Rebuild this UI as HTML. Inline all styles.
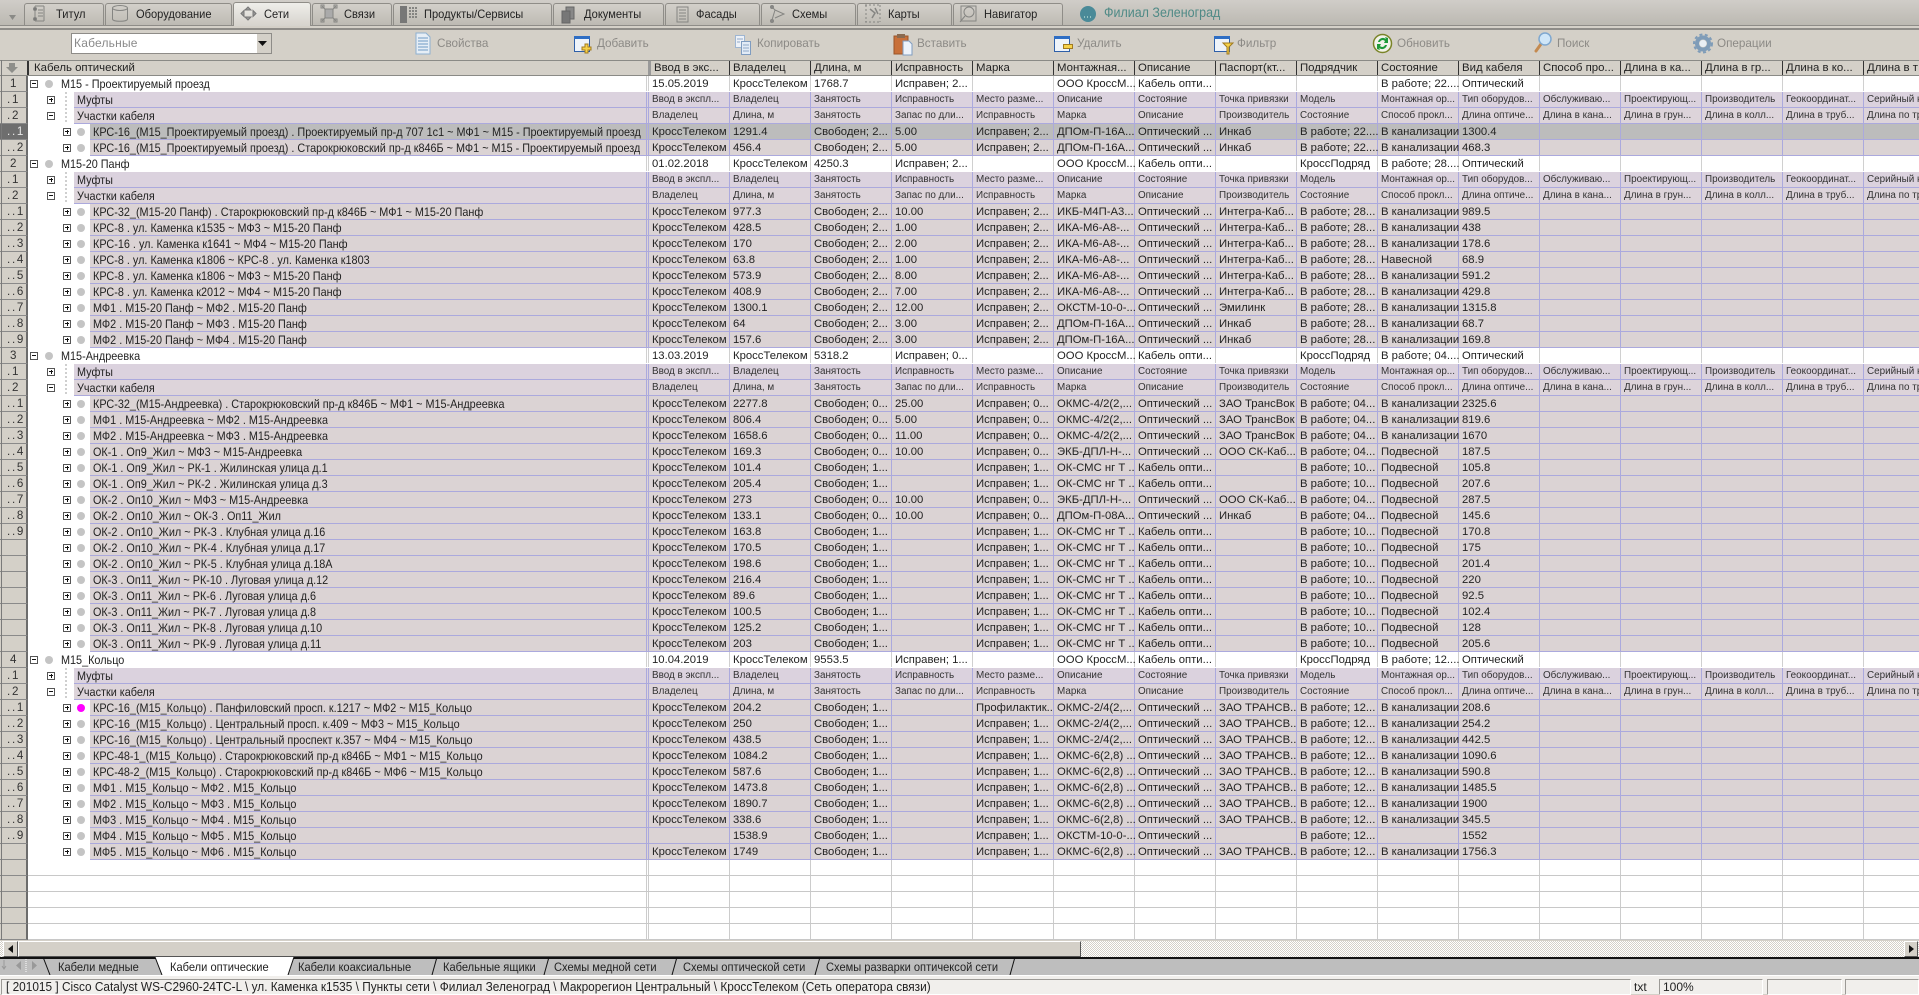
<!DOCTYPE html>
<html lang="ru"><head><meta charset="utf-8"><title>Кабель оптический</title>
<style>
*{box-sizing:border-box}
html,body{margin:0;padding:0}
body{width:1919px;height:994px;overflow:hidden;position:relative;background:#d4d0c8;font:12px "Liberation Sans","Noto Sans CJK SC",sans-serif;color:#222}
.abs,.tab,.tt,.tb{position:absolute}
#top{left:0;top:0;width:1919px;height:26px;background:linear-gradient(#d0cdc8,#bbb8b1);}
.tab{top:3px;height:22px;background:linear-gradient(#d3d0ca,#bdbab3);border:1px solid #8f8d88;border-bottom:0;border-radius:3px 3px 0 0}
.tab.on{top:2px;height:24px;background:linear-gradient(#efeeea,#d6d3cd);z-index:2}
.tt{top:4px;height:20px;line-height:20px;z-index:3;color:#222;transform:scaleX(.925);transform-origin:0 0;white-space:nowrap}
.tb{top:36px;line-height:16px;color:#8c8a86;font-size:11.7px}
#grid{position:absolute;left:0;top:76px;width:1919px}
.r{position:relative;height:16px;white-space:nowrap;padding-left:649px;font-size:0;border-bottom:1px solid var(--l);--l:#aba9dd;--c:#aba9dd;
background:
linear-gradient(var(--c),var(--c)) 646px 0/1px 100% no-repeat,linear-gradient(var(--c),var(--c)) 648px 0/1px 100% no-repeat,
linear-gradient(var(--c),var(--c)) 729px 0/1px 100% no-repeat,linear-gradient(var(--c),var(--c)) 810px 0/1px 100% no-repeat,
linear-gradient(var(--c),var(--c)) 891px 0/1px 100% no-repeat,linear-gradient(var(--c),var(--c)) 972px 0/1px 100% no-repeat,
linear-gradient(var(--c),var(--c)) 1053px 0/1px 100% no-repeat,linear-gradient(var(--c),var(--c)) 1134px 0/1px 100% no-repeat,
linear-gradient(var(--c),var(--c)) 1215px 0/1px 100% no-repeat,linear-gradient(var(--c),var(--c)) 1296px 0/1px 100% no-repeat,
linear-gradient(var(--c),var(--c)) 1377px 0/1px 100% no-repeat,linear-gradient(var(--c),var(--c)) 1458px 0/1px 100% no-repeat,
linear-gradient(var(--c),var(--c)) 1539px 0/1px 100% no-repeat,linear-gradient(var(--c),var(--c)) 1620px 0/1px 100% no-repeat,
linear-gradient(var(--c),var(--c)) 1701px 0/1px 100% no-repeat,linear-gradient(var(--c),var(--c)) 1782px 0/1px 100% no-repeat,
linear-gradient(var(--c),var(--c)) 1863px 0/1px 100% no-repeat,var(--b)}
.w{--b:#fff;--c:#d0d0d0;--l:#fff}
.m{--b:#dbd2de}
.u{--b:#ddd4da}
.d{--b:#dbd3d4}
.s{--b:#bcbcbc}
.e{--b:#fff;--c:#ccc;--l:#c8c8c8}
.r i{display:inline-block;width:81px;height:15px;padding-left:3px;overflow:hidden;font:normal 11.3px/17px "Liberation Sans",sans-serif;vertical-align:top;color:#222}
.m i,.u i{font-size:9.9px;line-height:16px;color:#333}
.r b{position:absolute;left:0;top:0;height:16px;width:28px;background:#d4d0c8;border-right:2px solid #6c6c6c;border-bottom:1px solid #8a8a8a;font:normal 11.6px/16px "Liberation Sans",sans-serif;padding-left:7px;word-spacing:-1.500px;z-index:3;color:#333;white-space:pre;overflow:hidden}
.w b{padding-left:10px}
.s b{background:#6e6e6e;color:#e8e8e8}
.m:before,.u:before,.d:before,.s:before{content:"";position:absolute;left:28px;top:0;height:16px;background:#fff;z-index:1}
.m:before,.u:before{width:46px}
.d:before,.s:before{width:62px}
.m:after,.u:after{content:"";position:absolute;left:65px;top:0;height:16px;width:2px;z-index:2;background:repeating-linear-gradient(#cfcfcf 0 2px,#fff 2px 4px)}
.r u{position:absolute;top:4px;width:8px;height:8px;border:1px solid #555;background:#fff;z-index:2}
.r u:before{content:"";position:absolute;left:1px;top:2px;width:4px;height:1px;background:#111}
.r u.p:after{content:"";position:absolute;left:2.500px;top:1px;width:1px;height:4px;background:#111}
.w u{left:30px}.m u,.u u{left:47px}.d u,.s u{left:63px}
.r em{position:absolute;top:4px;width:8px;height:8px;border-radius:50%;background:#c4c4c4;z-index:2}
.w em{left:45px}.d em,.s em{left:77px}
.r em.g{background:#f0f}
.r span{position:absolute;top:0;font:normal 11.6px/17px "Liberation Sans",sans-serif;color:#222;z-index:2;max-width:590px;height:15px;overflow:hidden;transform:scaleX(.935);transform-origin:0 0}
.w span{left:61px}.m span,.u span{left:77px}.d span,.s span{left:93px}
#hd{position:absolute;left:0;top:60px;width:1919px;height:16px;background:#d4d0c8;border-top:1px solid #8a8a86;border-bottom:1px solid #8a8a86;overflow:hidden;font-size:11.4px}
#hd div{position:absolute;top:0;height:15px;line-height:14px;padding-left:3px;border-left:1px solid #333;white-space:nowrap;overflow:hidden;width:81px}
#sb{position:absolute;left:0;top:941px;width:1919px;height:16px;background:repeating-conic-gradient(#d4d0c8 0 25%,#fff 0 50%) 0 0/2px 2px}
.btn{position:absolute;top:0;height:16px;background:#d4d0c8;border:1px solid;border-color:#fff #555 #555 #fff}
#st{position:absolute;left:0;top:975px;width:1919px;height:19px;background:#f1efec;border-top:1px solid #fff}
.pane{position:absolute;top:3px;height:16px;border:1px solid;border-color:#9c9a96 #fff #fff #9c9a96}
#sheet{position:absolute;left:0;top:957px;width:1919px;height:18px;background:#bebebe;border-top:2px solid #111}
#sheet div{position:absolute;top:0;line-height:17px;color:#222;white-space:nowrap;z-index:3;transform:scaleX(.925);transform-origin:0 0}
</style></head><body>
<div id="top" class="abs"></div>
<div class="abs" style="left:0;top:25px;width:1919px;height:1px;background:#8e8c88"></div>
<div class="abs" style="left:0;top:28px;width:1919px;height:2px;background:#8e8c88"></div>
<div class="tab" style="left:24px;width:80px"></div>
<div class="tab" style="left:105px;width:127px"></div>
<div class="tab on" style="left:233px;width:78px"></div>
<div class="tab" style="left:312px;width:80px"></div>
<div class="tab" style="left:393px;width:159px"></div>
<div class="tab" style="left:553px;width:111px"></div>
<div class="tab" style="left:665px;width:95px"></div>
<div class="tab" style="left:761px;width:95px"></div>
<div class="tab" style="left:857px;width:95px"></div>
<div class="tab" style="left:953px;width:110px"></div>
<div class="tt" style="left:56px">Титул</div>
<div class="tt" style="left:136px">Оборудование</div>
<div class="tt" style="left:264px">Сети</div>
<div class="tt" style="left:344px">Связи</div>
<div class="tt" style="left:424px">Продукты/Сервисы</div>
<div class="tt" style="left:584px">Документы</div>
<div class="tt" style="left:696px">Фасады</div>
<div class="tt" style="left:792px">Схемы</div>
<div class="tt" style="left:888px">Карты</div>
<div class="tt" style="left:984px">Навигатор</div>
<div class="tt" style="left:1104px;top:3px;color:#4f8a86;font-size:13.500px">Филиал Зеленоград</div>
<svg class="abs" style="left:0;top:0;z-index:4" width="1919" height="60" fill="none">
<path d="M9 15h7l-3.500 5z" fill="#8a8a86"/>
<g stroke="#858582" stroke-width="1">
<path d="M35 6h9M35 21h9M35 6v15M44 6v15M38 10h5M38 13h5M38 16h5"/><circle cx="35" cy="9" r="1.500" fill="#777"/><circle cx="35" cy="19" r="1.500" fill="#777"/>
<ellipse cx="120" cy="8" rx="7.500" ry="2.500"/><path d="M112.500 8v11c0 3 15 3 15 0V8"/>
<path d="M248 7l-3 3h6zM248 20l-3-3h6zM241 13.500l3-3v6zM256 13.500l-3-3v6z" fill="#999" stroke="#777"/>
<path d="M322 6l14 15M336 6l-14 15"/><rect x="325" y="9" width="8" height="9" fill="#aaa"/><rect x="321" y="5" width="3" height="3"/><rect x="334" y="5" width="3" height="3"/><rect x="321" y="19" width="3" height="3"/><rect x="334" y="19" width="3" height="3"/>
<rect x="400" y="6" width="7" height="17" fill="#777" stroke="none"/><path d="M409 8h8M409 11h8M409 14h8M409 17h8" stroke-dasharray="2 1" stroke-width="2"/>
<rect x="566" y="7" width="8" height="12" fill="#888" stroke="#666"/><rect x="562" y="11" width="8" height="12" fill="#777" stroke="#666"/>
<rect x="677" y="7" width="11" height="15"/><path d="M679 10h7M679 13h7M679 16h7M679 19h7"/>
<path d="M772 7l3 3-3 10M775 10l9 4-9 4"/><circle cx="772" cy="7" r="1.500" fill="#888"/><circle cx="772" cy="21" r="1.500" fill="#888"/>
<path d="M865 5h16M865 22h16M866 5v17M880 5v17" stroke-dasharray="2 2"/><path d="M870 9l5 4-3 5M875 8l3 6" stroke-width="1.500"/>
<rect x="961" y="6" width="15" height="15"/><circle cx="969" cy="12" r="5"/><path d="M965 16l-5 6"/>
</g>
<circle cx="1088" cy="14" r="8" fill="#4a8a98"/><path d="M1084 17h1M1087 17h1M1090 17h1" stroke="#dfe" stroke-width="1"/>
<path d="M416 33h10l4 4v17h-14z" fill="#e6eef6" stroke="#8eb0d0"/><path d="M418 38h10M418 41h10M418 44h10M418 47h10M418 50h10" stroke="#6f9ac4"/>
<rect x="574.500" y="36.500" width="15" height="15" fill="#eef3fa" stroke="#2e5fa8"/><rect x="574" y="36" width="16" height="3" fill="#2f6ec4"/>
<path d="M585 44h3v3h3v3h-3v3h-3v-3h-3v-3h3z" fill="#f6d24a" stroke="#a07a20"/>
<rect x="735.500" y="35.500" width="9" height="12" fill="#eef2f8" stroke="#9fb6d2"/><rect x="741.500" y="41.500" width="9" height="13" fill="#e2ebf6" stroke="#7f9cc0"/><path d="M737 39h6M737 42h3M743 45h6M743 48h6M743 51h6" stroke="#90a8c8"/>
<rect x="894" y="36" width="14" height="18" fill="#c8703a" stroke="#9a5528"/><rect x="897" y="34" width="8" height="4" fill="#8a6a50"/><path d="M903 41h6l3 3v11h-9z" fill="#eef3fa" stroke="#7f9cc0"/>
<rect x="1054.500" y="36.500" width="15" height="15" fill="#eef3fa" stroke="#2e5fa8"/><rect x="1054" y="36" width="16" height="3" fill="#2f6ec4"/><rect x="1063.500" y="44.500" width="9" height="4" fill="#f6d24a" stroke="#a07a20"/>
<rect x="1214.500" y="36.500" width="15" height="15" fill="#eef3fa" stroke="#2e5fa8"/><rect x="1214" y="36" width="16" height="3" fill="#2f6ec4"/><path d="M1223 43h10l-4 4v7h-2v-7z" fill="#f6d24a" stroke="#a07a20"/>
<circle cx="1382.500" cy="43.500" r="9" fill="#f3f3ea" stroke="#7a8428" stroke-width="1.500"/><path d="M1378 42a5 5 0 0 1 8-3l-1-2 3 1v5h-4l1-2a3 3 0 0 0-5 1zM1387 45a5 5 0 0 1-8 3l1 2-3-1v-5h4l-1 2a3 3 0 0 0 5-1z" fill="#1f9a3a"/>
<path d="M1541 44l-5 7" stroke="#c48a50" stroke-width="3" stroke-linecap="round"/><circle cx="1545" cy="39" r="6" fill="#cfe6f8" stroke="#7fa8d0" stroke-width="1.500"/>
<circle cx="1703" cy="43.500" r="6" stroke="#7f9cb8" stroke-width="4"/><circle cx="1703" cy="43.500" r="9" stroke="#7f9cb8" stroke-width="2" stroke-dasharray="3 2.500"/><circle cx="1703" cy="43.500" r="3.500" fill="#e8eef4"/>
</svg>
<div class="abs" style="left:71px;top:33px;width:201px;height:21px;background:#fff;border:1px solid #8e8c88;padding-left:2px;line-height:18px;color:#8a8a8a;letter-spacing:.2px">Кабельные</div>
<div class="abs" style="left:256px;top:34px;width:15px;height:19px;background:#d4d0c8;border-left:1px solid #fff"></div>
<svg class="abs" style="left:258px;top:41px;z-index:4" width="10" height="6"><path d="M0 0h9l-4.500 5z" fill="#111"/></svg>
<div class="tb" style="left:437px">Свойства</div>
<div class="tb" style="left:597px">Добавить</div>
<div class="tb" style="left:757px">Копировать</div>
<div class="tb" style="left:917px">Вставить</div>
<div class="tb" style="left:1077px">Удалить</div>
<div class="tb" style="left:1237px">Фильтр</div>
<div class="tb" style="left:1397px">Обновить</div>
<div class="tb" style="left:1557px">Поиск</div>
<div class="tb" style="left:1717px">Операции</div>
<div id="hd">
<div style="left:27px;width:619px;padding-left:5px;border-left:2px solid #333">Кабель оптический</div>
<div style="left:648px;border-left:3px solid #999">Ввод в экс...</div>
<div style="left:729px">Владелец</div><div style="left:810px">Длина, м</div><div style="left:891px">Исправность</div><div style="left:972px">Марка</div><div style="left:1053px">Монтажная...</div><div style="left:1134px">Описание</div><div style="left:1215px">Паспорт(кт...</div><div style="left:1296px">Подрядчик</div><div style="left:1377px">Состояние</div><div style="left:1458px">Вид кабеля</div><div style="left:1539px">Способ про...</div><div style="left:1620px">Длина в ка...</div><div style="left:1701px">Длина в гр...</div><div style="left:1782px">Длина в ко...</div><div style="left:1863px">Длина в т</div>
<svg class="abs" style="left:5px;top:2px" width="14" height="12"><path d="M4 0h6v4h3l-6 6-6-6h3z" fill="#8e8e8a"/></svg>
</div>
<div id="grid">
<div class="r w"><b>1</b><u class="n"></u><em></em><span>М15 - Проектируемый проезд</span><i>15.05.2019</i><i>КроссТелеком</i><i>1768.7</i><i>Исправен; 2...</i><i></i><i>ООО КроссМ...</i><i>Кабель опти...</i><i></i><i></i><i>В работе; 22....</i><i>Оптический</i></div>
<div class="r m"><b>. 1</b><u class="p"></u><span>Муфты</span><i>Ввод в экспл...</i><i>Владелец</i><i>Занятость</i><i>Исправность</i><i>Место разме...</i><i>Описание</i><i>Состояние</i><i>Точка привязки</i><i>Модель</i><i>Монтажная ор...</i><i>Тип оборудов...</i><i>Обслуживаю...</i><i>Проектирующ...</i><i>Производитель</i><i>Геокоординат...</i><i>Серийный н</i></div>
<div class="r u"><b>. 2</b><u class="n"></u><span>Участки кабеля</span><i>Владелец</i><i>Длина, м</i><i>Занятость</i><i>Запас по дли...</i><i>Исправность</i><i>Марка</i><i>Описание</i><i>Производитель</i><i>Состояние</i><i>Способ прокл...</i><i>Длина оптиче...</i><i>Длина в кана...</i><i>Длина в грун...</i><i>Длина в колл...</i><i>Длина в труб...</i><i>Длина по тр</i></div>
<div class="r s"><b>. . 1</b><u class="p"></u><em></em><span>КРС-16_(М15_Проектируемый проезд) . Проектируемый пр-д 707 1с1 ~ МФ1 ~ М15 - Проектируемый проезд</span><i>КроссТелеком</i><i>1291.4</i><i>Свободен; 2...</i><i>5.00</i><i>Исправен; 2...</i><i>ДПОм-П-16А...</i><i>Оптический ...</i><i>Инкаб</i><i>В работе; 22....</i><i>В канализации</i><i>1300.4</i></div>
<div class="r d"><b>. . 2</b><u class="p"></u><em></em><span>КРС-16_(М15_Проектируемый проезд) . Старокрюковский пр-д к846Б ~ МФ1 ~ М15 - Проектируемый проезд</span><i>КроссТелеком</i><i>456.4</i><i>Свободен; 2...</i><i>5.00</i><i>Исправен; 2...</i><i>ДПОм-П-16А...</i><i>Оптический ...</i><i>Инкаб</i><i>В работе; 22....</i><i>В канализации</i><i>468.3</i></div>

<div class="r w"><b>2</b><u class="n"></u><em></em><span>М15-20 Панф</span><i>01.02.2018</i><i>КроссТелеком</i><i>4250.3</i><i>Исправен; 2...</i><i></i><i>ООО КроссМ...</i><i>Кабель опти...</i><i></i><i>КроссПодряд</i><i>В работе; 28....</i><i>Оптический</i></div>
<div class="r m"><b>. 1</b><u class="p"></u><span>Муфты</span><i>Ввод в экспл...</i><i>Владелец</i><i>Занятость</i><i>Исправность</i><i>Место разме...</i><i>Описание</i><i>Состояние</i><i>Точка привязки</i><i>Модель</i><i>Монтажная ор...</i><i>Тип оборудов...</i><i>Обслуживаю...</i><i>Проектирующ...</i><i>Производитель</i><i>Геокоординат...</i><i>Серийный н</i></div>
<div class="r u"><b>. 2</b><u class="n"></u><span>Участки кабеля</span><i>Владелец</i><i>Длина, м</i><i>Занятость</i><i>Запас по дли...</i><i>Исправность</i><i>Марка</i><i>Описание</i><i>Производитель</i><i>Состояние</i><i>Способ прокл...</i><i>Длина оптиче...</i><i>Длина в кана...</i><i>Длина в грун...</i><i>Длина в колл...</i><i>Длина в труб...</i><i>Длина по тр</i></div>
<div class="r d"><b>. . 1</b><u class="p"></u><em></em><span>КРС-32_(М15-20 Панф) . Старокрюковский пр-д к846Б ~ МФ1 ~ М15-20 Панф</span><i>КроссТелеком</i><i>977.3</i><i>Свободен; 2...</i><i>10.00</i><i>Исправен; 2...</i><i>ИКБ-М4П-А3...</i><i>Оптический ...</i><i>Интегра-Каб...</i><i>В работе; 28...</i><i>В канализации</i><i>989.5</i></div>
<div class="r d"><b>. . 2</b><u class="p"></u><em></em><span>КРС-8 . ул. Каменка к1535 ~ МФ3 ~ М15-20 Панф</span><i>КроссТелеком</i><i>428.5</i><i>Свободен; 2...</i><i>1.00</i><i>Исправен; 2...</i><i>ИКА-М6-А8-...</i><i>Оптический ...</i><i>Интегра-Каб...</i><i>В работе; 28...</i><i>В канализации</i><i>438</i></div>
<div class="r d"><b>. . 3</b><u class="p"></u><em></em><span>КРС-16 . ул. Каменка к1641 ~ МФ4 ~ М15-20 Панф</span><i>КроссТелеком</i><i>170</i><i>Свободен; 2...</i><i>2.00</i><i>Исправен; 2...</i><i>ИКА-М6-А8-...</i><i>Оптический ...</i><i>Интегра-Каб...</i><i>В работе; 28...</i><i>В канализации</i><i>178.6</i></div>
<div class="r d"><b>. . 4</b><u class="p"></u><em></em><span>КРС-8 . ул. Каменка к1806 ~ КРС-8 . ул. Каменка к1803</span><i>КроссТелеком</i><i>63.8</i><i>Свободен; 2...</i><i>1.00</i><i>Исправен; 2...</i><i>ИКА-М6-А8-...</i><i>Оптический ...</i><i>Интегра-Каб...</i><i>В работе; 28...</i><i>Навесной</i><i>68.9</i></div>
<div class="r d"><b>. . 5</b><u class="p"></u><em></em><span>КРС-8 . ул. Каменка к1806 ~ МФ3 ~ М15-20 Панф</span><i>КроссТелеком</i><i>573.9</i><i>Свободен; 2...</i><i>8.00</i><i>Исправен; 2...</i><i>ИКА-М6-А8-...</i><i>Оптический ...</i><i>Интегра-Каб...</i><i>В работе; 28...</i><i>В канализации</i><i>591.2</i></div>
<div class="r d"><b>. . 6</b><u class="p"></u><em></em><span>КРС-8 . ул. Каменка к2012 ~ МФ4 ~ М15-20 Панф</span><i>КроссТелеком</i><i>408.9</i><i>Свободен; 2...</i><i>7.00</i><i>Исправен; 2...</i><i>ИКА-М6-А8-...</i><i>Оптический ...</i><i>Интегра-Каб...</i><i>В работе; 28...</i><i>В канализации</i><i>429.8</i></div>
<div class="r d"><b>. . 7</b><u class="p"></u><em></em><span>МФ1 . М15-20 Панф ~ МФ2 . М15-20 Панф</span><i>КроссТелеком</i><i>1300.1</i><i>Свободен; 2...</i><i>12.00</i><i>Исправен; 2...</i><i>ОКСТМ-10-0-...</i><i>Оптический ...</i><i>Эмилинк</i><i>В работе; 28...</i><i>В канализации</i><i>1315.8</i></div>
<div class="r d"><b>. . 8</b><u class="p"></u><em></em><span>МФ2 . М15-20 Панф ~ МФ3 . М15-20 Панф</span><i>КроссТелеком</i><i>64</i><i>Свободен; 2...</i><i>3.00</i><i>Исправен; 2...</i><i>ДПОм-П-16А...</i><i>Оптический ...</i><i>Инкаб</i><i>В работе; 28...</i><i>В канализации</i><i>68.7</i></div>
<div class="r d"><b>. . 9</b><u class="p"></u><em></em><span>МФ2 . М15-20 Панф ~ МФ4 . М15-20 Панф</span><i>КроссТелеком</i><i>157.6</i><i>Свободен; 2...</i><i>3.00</i><i>Исправен; 2...</i><i>ДПОм-П-16А...</i><i>Оптический ...</i><i>Инкаб</i><i>В работе; 28...</i><i>В канализации</i><i>169.8</i></div>

<div class="r w"><b>3</b><u class="n"></u><em></em><span>М15-Андреевка</span><i>13.03.2019</i><i>КроссТелеком</i><i>5318.2</i><i>Исправен; 0...</i><i></i><i>ООО КроссМ...</i><i>Кабель опти...</i><i></i><i>КроссПодряд</i><i>В работе; 04....</i><i>Оптический</i></div>
<div class="r m"><b>. 1</b><u class="p"></u><span>Муфты</span><i>Ввод в экспл...</i><i>Владелец</i><i>Занятость</i><i>Исправность</i><i>Место разме...</i><i>Описание</i><i>Состояние</i><i>Точка привязки</i><i>Модель</i><i>Монтажная ор...</i><i>Тип оборудов...</i><i>Обслуживаю...</i><i>Проектирующ...</i><i>Производитель</i><i>Геокоординат...</i><i>Серийный н</i></div>
<div class="r u"><b>. 2</b><u class="n"></u><span>Участки кабеля</span><i>Владелец</i><i>Длина, м</i><i>Занятость</i><i>Запас по дли...</i><i>Исправность</i><i>Марка</i><i>Описание</i><i>Производитель</i><i>Состояние</i><i>Способ прокл...</i><i>Длина оптиче...</i><i>Длина в кана...</i><i>Длина в грун...</i><i>Длина в колл...</i><i>Длина в труб...</i><i>Длина по тр</i></div>
<div class="r d"><b>. . 1</b><u class="p"></u><em></em><span>КРС-32_(М15-Андреевка) . Старокрюковский пр-д к846Б ~ МФ1 ~ М15-Андреевка</span><i>КроссТелеком</i><i>2277.8</i><i>Свободен; 0...</i><i>25.00</i><i>Исправен; 0...</i><i>ОКМС-4/2(2,...</i><i>Оптический ...</i><i>ЗАО ТрансВок</i><i>В работе; 04...</i><i>В канализации</i><i>2325.6</i></div>
<div class="r d"><b>. . 2</b><u class="p"></u><em></em><span>МФ1 . М15-Андреевка ~ МФ2 . М15-Андреевка</span><i>КроссТелеком</i><i>806.4</i><i>Свободен; 0...</i><i>5.00</i><i>Исправен; 0...</i><i>ОКМС-4/2(2,...</i><i>Оптический ...</i><i>ЗАО ТрансВок</i><i>В работе; 04...</i><i>В канализации</i><i>819.6</i></div>
<div class="r d"><b>. . 3</b><u class="p"></u><em></em><span>МФ2 . М15-Андреевка ~ МФ3 . М15-Андреевка</span><i>КроссТелеком</i><i>1658.6</i><i>Свободен; 0...</i><i>11.00</i><i>Исправен; 0...</i><i>ОКМС-4/2(2,...</i><i>Оптический ...</i><i>ЗАО ТрансВок</i><i>В работе; 04...</i><i>В канализации</i><i>1670</i></div>
<div class="r d"><b>. . 4</b><u class="p"></u><em></em><span>ОК-1 . Оп9_Жил ~ МФ3 ~ М15-Андреевка</span><i>КроссТелеком</i><i>169.3</i><i>Свободен; 0...</i><i>10.00</i><i>Исправен; 0...</i><i>ЭКБ-ДПЛ-Н-...</i><i>Оптический ...</i><i>ООО СК-Каб...</i><i>В работе; 04...</i><i>Подвесной</i><i>187.5</i></div>
<div class="r d"><b>. . 5</b><u class="p"></u><em></em><span>ОК-1 . Оп9_Жил ~ РК-1 . Жилинская улица д.1</span><i>КроссТелеком</i><i>101.4</i><i>Свободен; 1...</i><i></i><i>Исправен; 1...</i><i>ОК-СМС нг Т ...</i><i>Кабель опти...</i><i></i><i>В работе; 10...</i><i>Подвесной</i><i>105.8</i></div>
<div class="r d"><b>. . 6</b><u class="p"></u><em></em><span>ОК-1 . Оп9_Жил ~ РК-2 . Жилинская улица д.3</span><i>КроссТелеком</i><i>205.4</i><i>Свободен; 1...</i><i></i><i>Исправен; 1...</i><i>ОК-СМС нг Т ...</i><i>Кабель опти...</i><i></i><i>В работе; 10...</i><i>Подвесной</i><i>207.6</i></div>
<div class="r d"><b>. . 7</b><u class="p"></u><em></em><span>ОК-2 . Оп10_Жил ~ МФ3 ~ М15-Андреевка</span><i>КроссТелеком</i><i>273</i><i>Свободен; 0...</i><i>10.00</i><i>Исправен; 0...</i><i>ЭКБ-ДПЛ-Н-...</i><i>Оптический ...</i><i>ООО СК-Каб...</i><i>В работе; 04...</i><i>Подвесной</i><i>287.5</i></div>
<div class="r d"><b>. . 8</b><u class="p"></u><em></em><span>ОК-2 . Оп10_Жил ~ ОК-3 . Оп11_Жил</span><i>КроссТелеком</i><i>133.1</i><i>Свободен; 0...</i><i>10.00</i><i>Исправен; 0...</i><i>ДПОм-П-08А...</i><i>Оптический ...</i><i>Инкаб</i><i>В работе; 04...</i><i>Подвесной</i><i>145.6</i></div>
<div class="r d"><b>. . 9</b><u class="p"></u><em></em><span>ОК-2 . Оп10_Жил ~ РК-3 . Клубная улица д.16</span><i>КроссТелеком</i><i>163.8</i><i>Свободен; 1...</i><i></i><i>Исправен; 1...</i><i>ОК-СМС нг Т ...</i><i>Кабель опти...</i><i></i><i>В работе; 10...</i><i>Подвесной</i><i>170.8</i></div>
<div class="r d"><b></b><u class="p"></u><em></em><span>ОК-2 . Оп10_Жил ~ РК-4 . Клубная улица д.17</span><i>КроссТелеком</i><i>170.5</i><i>Свободен; 1...</i><i></i><i>Исправен; 1...</i><i>ОК-СМС нг Т ...</i><i>Кабель опти...</i><i></i><i>В работе; 10...</i><i>Подвесной</i><i>175</i></div>
<div class="r d"><b></b><u class="p"></u><em></em><span>ОК-2 . Оп10_Жил ~ РК-5 . Клубная улица д.18А</span><i>КроссТелеком</i><i>198.6</i><i>Свободен; 1...</i><i></i><i>Исправен; 1...</i><i>ОК-СМС нг Т ...</i><i>Кабель опти...</i><i></i><i>В работе; 10...</i><i>Подвесной</i><i>201.4</i></div>
<div class="r d"><b></b><u class="p"></u><em></em><span>ОК-3 . Оп11_Жил ~ РК-10 . Луговая улица д.12</span><i>КроссТелеком</i><i>216.4</i><i>Свободен; 1...</i><i></i><i>Исправен; 1...</i><i>ОК-СМС нг Т ...</i><i>Кабель опти...</i><i></i><i>В работе; 10...</i><i>Подвесной</i><i>220</i></div>
<div class="r d"><b></b><u class="p"></u><em></em><span>ОК-3 . Оп11_Жил ~ РК-6 . Луговая улица д.6</span><i>КроссТелеком</i><i>89.6</i><i>Свободен; 1...</i><i></i><i>Исправен; 1...</i><i>ОК-СМС нг Т ...</i><i>Кабель опти...</i><i></i><i>В работе; 10...</i><i>Подвесной</i><i>92.5</i></div>
<div class="r d"><b></b><u class="p"></u><em></em><span>ОК-3 . Оп11_Жил ~ РК-7 . Луговая улица д.8</span><i>КроссТелеком</i><i>100.5</i><i>Свободен; 1...</i><i></i><i>Исправен; 1...</i><i>ОК-СМС нг Т ...</i><i>Кабель опти...</i><i></i><i>В работе; 10...</i><i>Подвесной</i><i>102.4</i></div>
<div class="r d"><b></b><u class="p"></u><em></em><span>ОК-3 . Оп11_Жил ~ РК-8 . Луговая улица д.10</span><i>КроссТелеком</i><i>125.2</i><i>Свободен; 1...</i><i></i><i>Исправен; 1...</i><i>ОК-СМС нг Т ...</i><i>Кабель опти...</i><i></i><i>В работе; 10...</i><i>Подвесной</i><i>128</i></div>
<div class="r d"><b></b><u class="p"></u><em></em><span>ОК-3 . Оп11_Жил ~ РК-9 . Луговая улица д.11</span><i>КроссТелеком</i><i>203</i><i>Свободен; 1...</i><i></i><i>Исправен; 1...</i><i>ОК-СМС нг Т ...</i><i>Кабель опти...</i><i></i><i>В работе; 10...</i><i>Подвесной</i><i>205.6</i></div>

<div class="r w"><b>4</b><u class="n"></u><em></em><span>М15_Кольцо</span><i>10.04.2019</i><i>КроссТелеком</i><i>9553.5</i><i>Исправен; 1...</i><i></i><i>ООО КроссМ...</i><i>Кабель опти...</i><i></i><i>КроссПодряд</i><i>В работе; 12....</i><i>Оптический</i></div>
<div class="r m"><b>. 1</b><u class="p"></u><span>Муфты</span><i>Ввод в экспл...</i><i>Владелец</i><i>Занятость</i><i>Исправность</i><i>Место разме...</i><i>Описание</i><i>Состояние</i><i>Точка привязки</i><i>Модель</i><i>Монтажная ор...</i><i>Тип оборудов...</i><i>Обслуживаю...</i><i>Проектирующ...</i><i>Производитель</i><i>Геокоординат...</i><i>Серийный н</i></div>
<div class="r u"><b>. 2</b><u class="n"></u><span>Участки кабеля</span><i>Владелец</i><i>Длина, м</i><i>Занятость</i><i>Запас по дли...</i><i>Исправность</i><i>Марка</i><i>Описание</i><i>Производитель</i><i>Состояние</i><i>Способ прокл...</i><i>Длина оптиче...</i><i>Длина в кана...</i><i>Длина в грун...</i><i>Длина в колл...</i><i>Длина в труб...</i><i>Длина по тр</i></div>
<div class="r d"><b>. . 1</b><u class="p"></u><em class="g"></em><span>КРС-16_(М15_Кольцо) . Панфиловский просп. к.1217 ~ МФ2 ~ М15_Кольцо</span><i>КроссТелеком</i><i>204.2</i><i>Свободен; 1...</i><i></i><i>Профилактик...</i><i>ОКМС-2/4(2,...</i><i>Оптический ...</i><i>ЗАО ТРАНСВ...</i><i>В работе; 12...</i><i>В канализации</i><i>208.6</i></div>
<div class="r d"><b>. . 2</b><u class="p"></u><em></em><span>КРС-16_(М15_Кольцо) . Центральный просп. к.409 ~ МФ3 ~ М15_Кольцо</span><i>КроссТелеком</i><i>250</i><i>Свободен; 1...</i><i></i><i>Исправен; 1...</i><i>ОКМС-2/4(2,...</i><i>Оптический ...</i><i>ЗАО ТРАНСВ...</i><i>В работе; 12...</i><i>В канализации</i><i>254.2</i></div>
<div class="r d"><b>. . 3</b><u class="p"></u><em></em><span>КРС-16_(М15_Кольцо) . Центральный проспект к.357 ~ МФ4 ~ М15_Кольцо</span><i>КроссТелеком</i><i>438.5</i><i>Свободен; 1...</i><i></i><i>Исправен; 1...</i><i>ОКМС-2/4(2,...</i><i>Оптический ...</i><i>ЗАО ТРАНСВ...</i><i>В работе; 12...</i><i>В канализации</i><i>442.5</i></div>
<div class="r d"><b>. . 4</b><u class="p"></u><em></em><span>КРС-48-1_(М15_Кольцо) . Старокрюковский пр-д к846Б ~ МФ1 ~ М15_Кольцо</span><i>КроссТелеком</i><i>1084.2</i><i>Свободен; 1...</i><i></i><i>Исправен; 1...</i><i>ОКМС-6(2,8) ...</i><i>Оптический ...</i><i>ЗАО ТРАНСВ...</i><i>В работе; 12...</i><i>В канализации</i><i>1090.6</i></div>
<div class="r d"><b>. . 5</b><u class="p"></u><em></em><span>КРС-48-2_(М15_Кольцо) . Старокрюковский пр-д к846Б ~ МФ6 ~ М15_Кольцо</span><i>КроссТелеком</i><i>587.6</i><i>Свободен; 1...</i><i></i><i>Исправен; 1...</i><i>ОКМС-6(2,8) ...</i><i>Оптический ...</i><i>ЗАО ТРАНСВ...</i><i>В работе; 12...</i><i>В канализации</i><i>590.8</i></div>
<div class="r d"><b>. . 6</b><u class="p"></u><em></em><span>МФ1 . М15_Кольцо ~ МФ2 . М15_Кольцо</span><i>КроссТелеком</i><i>1473.8</i><i>Свободен; 1...</i><i></i><i>Исправен; 1...</i><i>ОКМС-6(2,8) ...</i><i>Оптический ...</i><i>ЗАО ТРАНСВ...</i><i>В работе; 12...</i><i>В канализации</i><i>1485.5</i></div>
<div class="r d"><b>. . 7</b><u class="p"></u><em></em><span>МФ2 . М15_Кольцо ~ МФ3 . М15_Кольцо</span><i>КроссТелеком</i><i>1890.7</i><i>Свободен; 1...</i><i></i><i>Исправен; 1...</i><i>ОКМС-6(2,8) ...</i><i>Оптический ...</i><i>ЗАО ТРАНСВ...</i><i>В работе; 12...</i><i>В канализации</i><i>1900</i></div>
<div class="r d"><b>. . 8</b><u class="p"></u><em></em><span>МФ3 . М15_Кольцо ~ МФ4 . М15_Кольцо</span><i>КроссТелеком</i><i>338.6</i><i>Свободен; 1...</i><i></i><i>Исправен; 1...</i><i>ОКМС-6(2,8) ...</i><i>Оптический ...</i><i>ЗАО ТРАНСВ...</i><i>В работе; 12...</i><i>В канализации</i><i>345.5</i></div>
<div class="r d"><b>. . 9</b><u class="p"></u><em></em><span>МФ4 . М15_Кольцо ~ МФ5 . М15_Кольцо</span><i></i><i>1538.9</i><i>Свободен; 1...</i><i></i><i>Исправен; 1...</i><i>ОКСТМ-10-0-...</i><i>Оптический ...</i><i></i><i>В работе; 12...</i><i></i><i>1552</i></div>
<div class="r d"><b></b><u class="p"></u><em></em><span>МФ5 . М15_Кольцо ~ МФ6 . М15_Кольцо</span><i>КроссТелеком</i><i>1749</i><i>Свободен; 1...</i><i></i><i>Исправен; 1...</i><i>ОКМС-6(2,8) ...</i><i>Оптический ...</i><i>ЗАО ТРАНСВ...</i><i>В работе; 12...</i><i>В канализации</i><i>1756.3</i></div>

<div class="r e"><b></b></div>
<div class="r e"><b></b></div>
<div class="r e"><b></b></div>
<div class="r e"><b></b></div>
<div class="r e"><b></b></div>
</div>
<div class="abs" style="left:1px;top:60px;width:1px;height:880px;background:#7a7a7a;z-index:5"></div>
<div id="sb">
<div class="btn" style="left:3px;width:15px"></div>
<div class="btn" style="left:18px;width:1063px"></div>
<div class="btn" style="left:1904px;width:14px"></div>
<svg class="abs" style="left:0;top:0" width="1919" height="16"><path d="M13 4v8l-5-4zM1909 4v8l5-4z" fill="#111"/></svg>
</div>
<div id="sheet">
<svg class="abs" style="left:0;top:-2px" width="1030" height="18" fill="none">
<path d="M4 3v9M2 9l2 3 2-3" stroke="#999"/><path d="M21 4v9l-5-4.500z" fill="#999"/><path d="M26 2v14" stroke="#fff" stroke-dasharray="1 1"/><path d="M32 4v9l5-4.500z" fill="#999"/>
<path d="M155 0L162 18H288L294 0Z" fill="#fff"/>
<path d="M43 0L50 18M155 0L162 18M294 0L288 18M437 0L432 18M549 0L544 18M677 0L672 18M820 0L815 18M1015 0L1010 18" stroke="#111"/>
</svg>
<div style="left:58px">Кабели медные</div>
<div style="left:170px">Кабели оптические</div>
<div style="left:298px">Кабели коаксиальные</div>
<div style="left:443px">Кабельные ящики</div>
<div style="left:554px">Схемы медной сети</div>
<div style="left:683px">Схемы оптической сети</div>
<div style="left:826px">Схемы разварки оптичексой сети</div>
</div>
<div id="st">
<div class="pane" style="left:1px;width:1630px"></div>
<div class="abs" style="left:6px;top:3px;line-height:16px;font-size:12.600px;white-space:nowrap;color:#222;transform:scaleX(.94);transform-origin:0 0">[ 201015 ] Cisco Catalyst WS-C2960-24TC-L \ ул. Каменка к1535 \ Пункты сети \ Филиал Зеленоград \ Макрорегион Центральный \ КроссТелеком (Сеть оператора связи)</div>
<div class="abs" style="left:1634px;top:3px;line-height:16px">txt</div>
<div class="pane" style="left:1659px;width:104px;padding-left:3px;line-height:14px">100%</div>
<div class="pane" style="left:1767px;width:75px"></div>
<div class="pane" style="left:1845px;width:74px"></div>
</div>
</body></html>
